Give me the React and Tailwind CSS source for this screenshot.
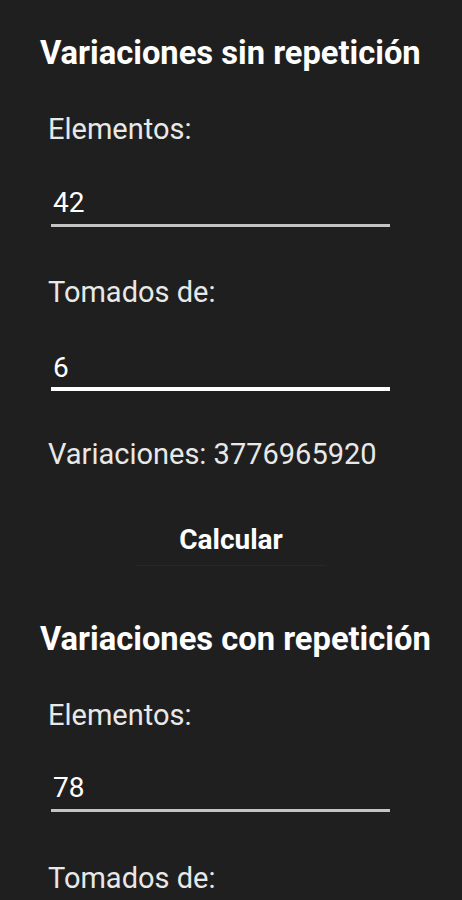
import React from 'react';

const Field = ({ value, focused, className = '' }) => (
  <div
    className={`ml-[51px] w-[339px] pl-[2px] ${
      focused ? 'border-b-4 border-white pb-[2px]' : 'border-b-[3px] border-[#c4c4c4] pb-[4px]'
    } ${className}`}
  >
    <span className="block text-[28px] leading-[34px] text-white">{value}</span>
  </div>
);

const Label = ({ children, className = '' }) => (
  <p className={`ml-[48px] text-[29px] leading-[34px] text-[#e8e8e8] ${className}`}>{children}</p>
);

const Heading = ({ children, className = '' }) => (
  <h1 className={`ml-[40px] text-[32.7px] leading-[40px] font-bold text-white ${className}`}>{children}</h1>
);

export default function App() {
  return (
    <div className="min-h-[900px] w-[462px] overflow-hidden bg-[#1f1f1f] font-['Roboto',sans-serif]">
      <div className="pt-[33px]">
        <Heading>Variaciones sin repetición</Heading>
        <Label className="mt-[39px]">Elementos:</Label>
        <Field value="42" className="mt-[40px]" />
        <Label className="mt-[48px]">Tomados de:</Label>
        <Field value="6" focused className="mt-[42px]" />
        <Label className="mt-[46px]">Variaciones: 3776965920</Label>
        <div className="mt-[52px] flex justify-center">
          <button className="w-[190px] border-b border-[#272727] pb-[8px] text-[28px] leading-[34px] font-bold text-white">
            Calcular
          </button>
        </div>
        <Heading className="mt-[53px]">Variaciones con repetición</Heading>
        <Label className="mt-[39px]">Elementos:</Label>
        <Field value="78" className="mt-[39px]" />
        <Label className="mt-[49px]">Tomados de:</Label>
      </div>
    </div>
  );
}
